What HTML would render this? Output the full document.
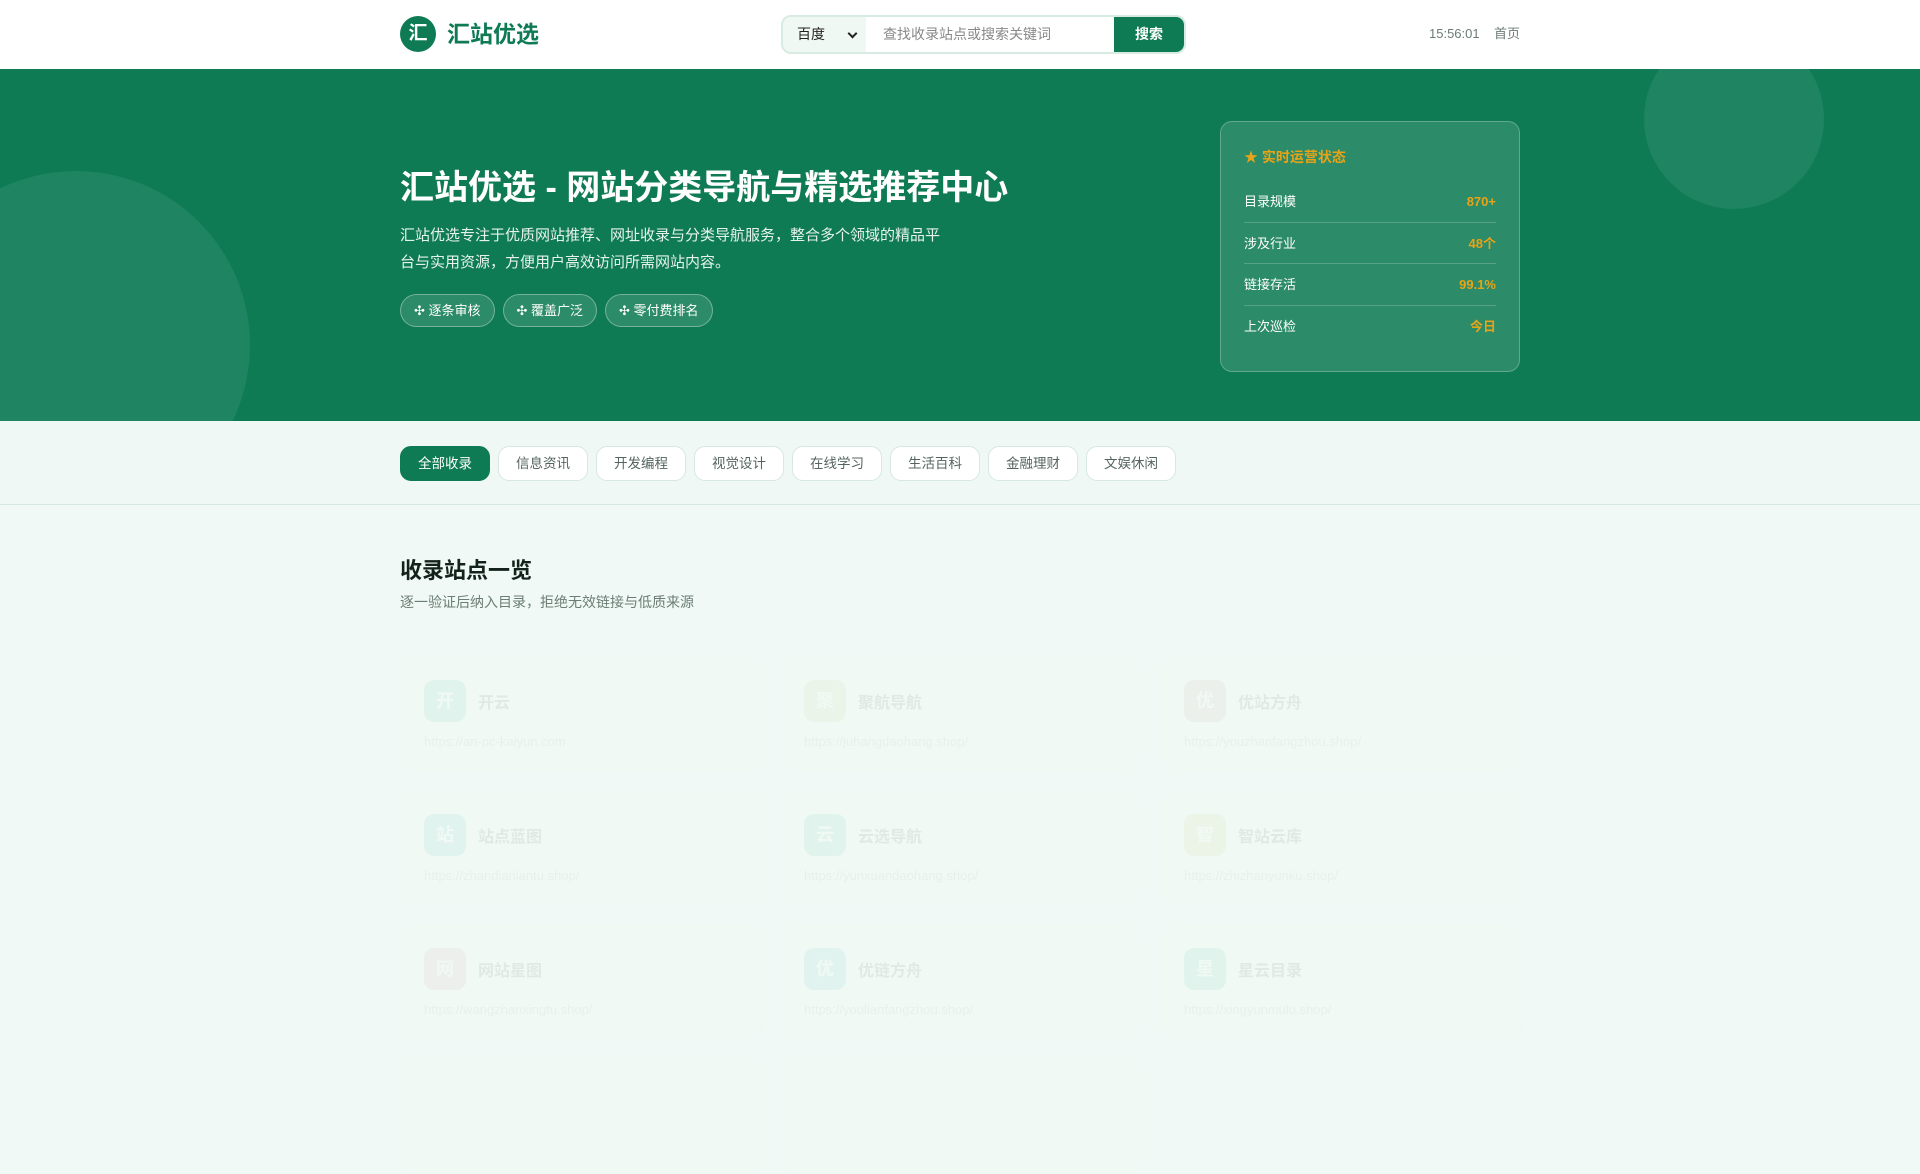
<!DOCTYPE html>
<html><head><meta charset="utf-8"><style>
*{box-sizing:border-box;margin:0;padding:0}
body{width:1920px;height:1080px;overflow:hidden;background:#f0f9f5;font-family:"Liberation Sans","Noto Sans CJK SC",sans-serif;position:relative}
.hdr{position:absolute;left:0;top:0;width:1920px;height:69px;background:#fff}
.logo{position:absolute;left:400px;top:16px;width:36px;height:36px;border-radius:50%;background:#0f7b55;color:#fff;font-size:19px;font-weight:bold;text-align:center;line-height:36px}
.brand{position:absolute;left:447px;top:18px;font-size:23px;font-weight:bold;color:#0f7b55;line-height:32px}
.search{position:absolute;left:781px;top:15px;width:405px;height:39px;border:2px solid #d8ebe2;border-radius:10px;overflow:hidden;display:flex}
.sel{width:83px;background:#f0f8f4;font-size:14px;color:#222;padding-left:14px;line-height:35px;position:relative}
.sel:after{content:"";position:absolute;right:10px;top:13px;width:5px;height:5px;border-right:2px solid #222;border-bottom:2px solid #222;transform:rotate(45deg)}
.inp{flex:1;background:#fff;font-size:14px;color:#888;padding-left:17px;line-height:35px}
.btn{width:70px;background:#0f7b55;color:#fff;font-size:14px;font-weight:bold;text-align:center;line-height:35px}
.time{position:absolute;left:1429px;top:26px;font-size:13px;line-height:16px;color:#6b7d75}
.home{position:absolute;left:1494px;top:26px;font-size:13px;line-height:16px;color:#6b7d75}
.hero{position:absolute;left:0;top:69px;width:1920px;height:352px;background:#0f7b55;overflow:hidden}
.c1{position:absolute;left:-98px;top:102px;width:348px;height:348px;border-radius:50%;background:#1e8462}
.c2{position:absolute;left:1644px;top:-40px;width:180px;height:180px;border-radius:50%;background:#1e8462}
h1{position:absolute;left:400px;top:97px;font-size:34px;color:#fff;font-weight:bold;line-height:44px;white-space:nowrap}
.desc{position:absolute;left:400px;top:153px;width:545px;font-size:15px;line-height:27px;color:#e6f3ed}
.tags{position:absolute;left:400px;top:225px;display:flex;gap:8px}
.tag{height:33px;border:1px solid rgba(255,255,255,.35);background:rgba(255,255,255,.12);border-radius:17px;color:#fff;font-size:13px;line-height:31px;padding:0 13px}
.card{position:absolute;left:1220px;top:52px;width:300px;height:251px;border:1px solid rgba(255,255,255,.25);background:rgba(255,255,255,.12);border-radius:12px;padding:25px 23px 0}
.ct{color:#e8a317;font-size:14px;font-weight:bold;height:34px;line-height:20px}
.row{display:flex;justify-content:space-between;height:41.5px;line-height:41px;font-size:13px;color:#fff;border-bottom:1px solid rgba(255,255,255,.2)}
.row:last-child{border-bottom:none}
.row b{color:#e8a317;font-size:13px}
.cats{position:absolute;left:0;top:421px;width:1920px;height:84px;background:#eff8f4;border-bottom:1px solid #d6e8e0}
.pills{position:absolute;left:400px;top:25px;display:flex;gap:8px}
.pill{width:90px;height:35px;border:1px solid #d7e8e0;background:#fff;border-radius:11px;text-align:center;line-height:33px;font-size:13.5px;color:#55655e}
.pill.a{background:#0f7b55;color:#fff;border-color:#0f7b55}
h2{position:absolute;left:400px;top:553px;font-size:22px;color:#13221b;font-weight:bold}
.sub{position:absolute;left:400px;top:592px;font-size:14px;color:#6b7d75}
.grid{position:absolute;left:400px;top:656px;opacity:.08}
.it{position:absolute;width:362px;height:116px;border:1px solid #dfe9e4;border-radius:14px;background:#f6fbf9}
.ic{position:absolute;left:23px;top:23px;width:42px;height:42px;border-radius:10px;color:#fff;font-weight:bold;font-size:18px;text-align:center;line-height:42px}
.nm{position:absolute;left:77px;top:32px;font-size:16px;font-weight:bold;color:#333}
.url{position:absolute;left:23px;top:77px;font-size:13px;color:#888}
</style></head><body>
<div class="hdr">
<div class="logo">汇</div><div class="brand">汇站优选</div>
<div class="search"><div class="sel">百度</div><div class="inp">查找收录站点或搜索关键词</div><div class="btn">搜索</div></div>
<div class="time">15:56:01</div><div class="home">首页</div>
</div>
<div class="hero">
<div class="c1"></div><div class="c2"></div>
<h1>汇站优选 - 网站分类导航与精选推荐中心</h1>
<div class="desc">汇站优选专注于优质网站推荐、网址收录与分类导航服务，整合多个领域的精品平台与实用资源，方便用户高效访问所需网站内容。</div>
<div class="tags"><div class="tag">✣ 逐条审核</div><div class="tag">✣ 覆盖广泛</div><div class="tag">✣ 零付费排名</div></div>
<div class="card"><div class="ct">★ 实时运营状态</div>
<div class="row"><span>目录规模</span><b>870+</b></div>
<div class="row"><span>涉及行业</span><b>48个</b></div>
<div class="row"><span>链接存活</span><b>99.1%</b></div>
<div class="row"><span>上次巡检</span><b>今日</b></div>
</div>
</div>
<div class="cats"><div class="pills">
<div class="pill a">全部收录</div><div class="pill">信息资讯</div><div class="pill">开发编程</div><div class="pill">视觉设计</div><div class="pill">在线学习</div><div class="pill">生活百科</div><div class="pill">金融理财</div><div class="pill">文娱休闲</div>
</div></div>
<h2>收录站点一览</h2>
<div class="sub">逐一验证后纳入目录，拒绝无效链接与低质来源</div>
<div class="grid">
<div class="it" style="left:0;top:0"><div class="ic" style="background:#3cb39a">开</div><div class="nm">开云</div><div class="url">https://an-pc-kaiyun.com</div></div>
<div class="it" style="left:380px;top:0"><div class="ic" style="background:#b6bb5a">聚</div><div class="nm">聚航导航</div><div class="url">https://juhangdaohang.shop/</div></div>
<div class="it" style="left:760px;top:0"><div class="ic" style="background:#b08a80">优</div><div class="nm">优站方舟</div><div class="url">https://youzhanfangzhou.shop/</div></div>
<div class="it" style="left:0;top:134px"><div class="ic" style="background:#3cb3a8">站</div><div class="nm">站点蓝图</div><div class="url">https://zhandianlantu.shop/</div></div>
<div class="it" style="left:380px;top:134px"><div class="ic" style="background:#3cb39a">云</div><div class="nm">云选导航</div><div class="url">https://yunxuandaohang.shop/</div></div>
<div class="it" style="left:760px;top:134px"><div class="ic" style="background:#c0c05a">智</div><div class="nm">智站云库</div><div class="url">https://zhizhanyunku.shop/</div></div>
<div class="it" style="left:0;top:268px"><div class="ic" style="background:#c07a80">网</div><div class="nm">网站星图</div><div class="url">https://wangzhanxingtu.shop/</div></div>
<div class="it" style="left:380px;top:268px"><div class="ic" style="background:#3cb3a8">优</div><div class="nm">优链方舟</div><div class="url">https://youlianfangzhou.shop/</div></div>
<div class="it" style="left:760px;top:268px"><div class="ic" style="background:#3cb39a">星</div><div class="nm">星云目录</div><div class="url">https://xingyunmulu.shop/</div></div>
<div class="it" style="left:0;top:402px"></div><div class="it" style="left:380px;top:402px"></div>
</div>
</body></html>
